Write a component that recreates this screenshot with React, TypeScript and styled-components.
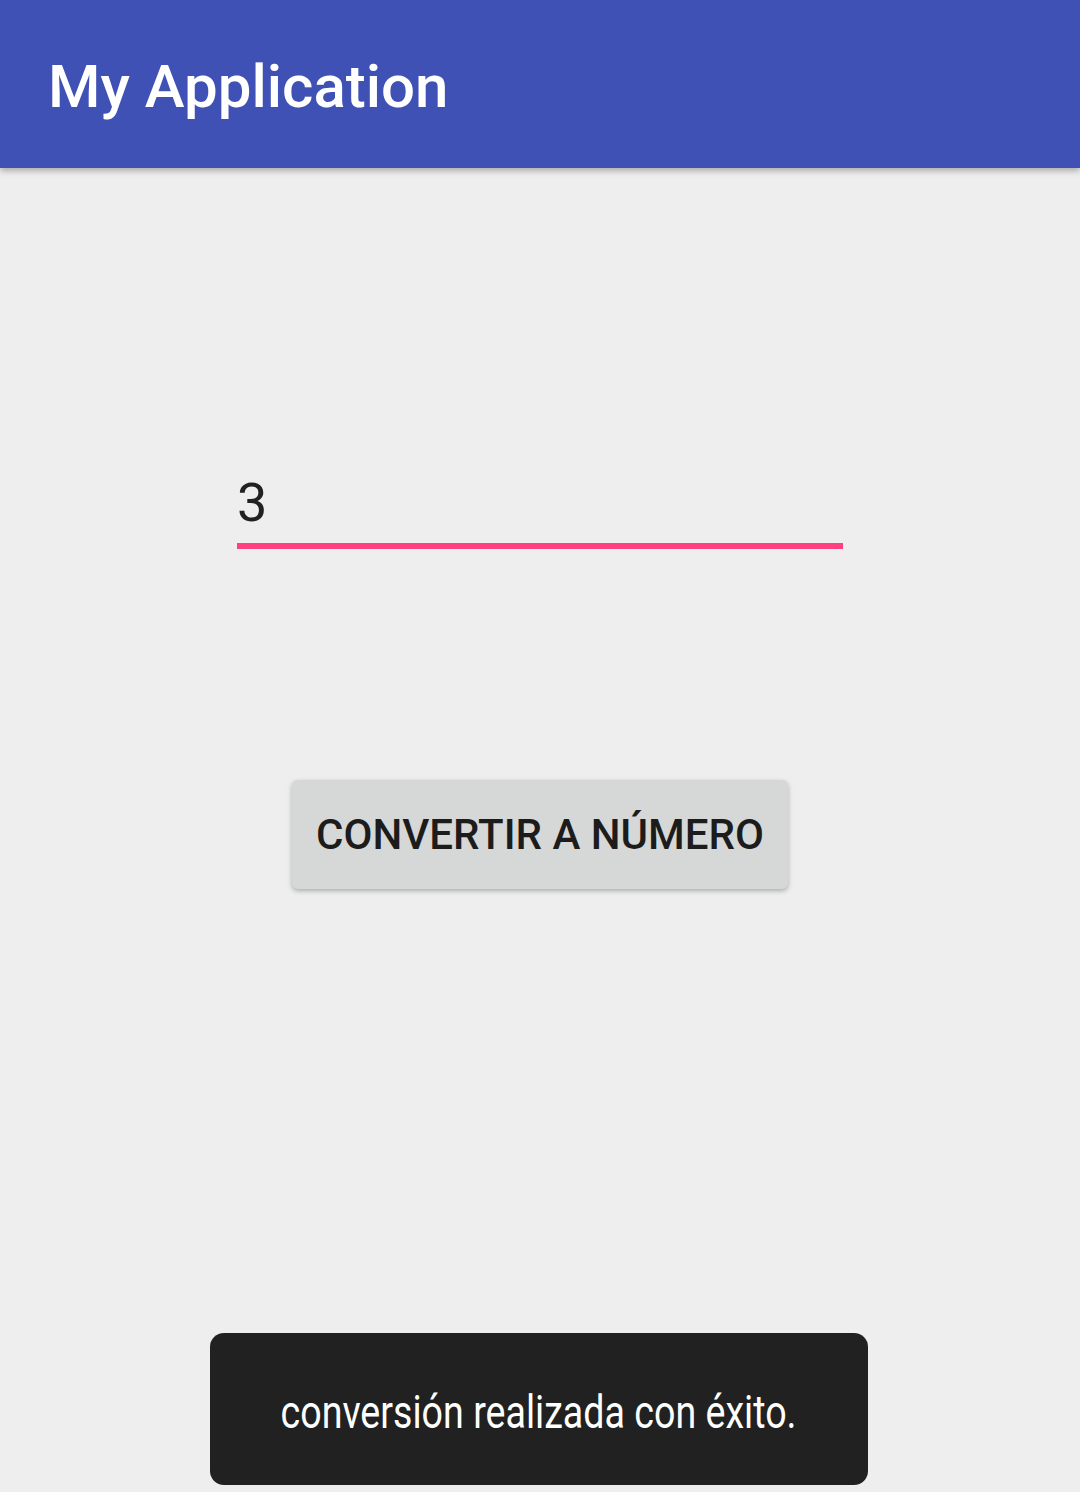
import styled, { createGlobalStyle } from "styled-components"

const GlobalStyle = createGlobalStyle`
  html, body {
    margin: 0;
    padding: 0;
    background: #eeeeee;
    font-family: Roboto, "Noto Sans", sans-serif;
  }
`

const Screen = styled.div`
  position: relative;
  width: 1080px;
  height: 1492px;
  background: #eeeeee;
  overflow: hidden;
  display: flex;
  flex-direction: column;
`

const AppBar = styled.header`
  height: 168px;
  background: #3f51b5;
  box-shadow: 0 3px 6px rgba(0, 0, 0, 0.28);
  display: flex;
  align-items: center;
  padding-left: 48px;
  position: relative;
  z-index: 1;
`

const Title = styled.h1`
  margin: 0;
  color: #ffffff;
  font-family: Roboto, sans-serif;
  font-weight: 500;
  font-size: 60px;
  letter-spacing: 0;
  padding-top: 4px;
`

const Content = styled.main`
  display: flex;
  flex-direction: column;
  align-items: center;
  padding-top: 303px;
`

const Field = styled.div`
  width: 606px;
  border-bottom: 6px solid #ff4081;
  padding-bottom: 8px;
`

const FieldValue = styled.span`
  display: block;
  font-family: Roboto, sans-serif;
  font-size: 54px;
  line-height: 64px;
  color: #212121;
`

const Button = styled.button`
  margin-top: 231px;
  width: 496px;
  height: 109px;
  border: none;
  border-radius: 6px;
  background: #d6d7d7;
  box-shadow: 0 2px 5px rgba(0, 0, 0, 0.28);
  font-family: Roboto, sans-serif;
  font-weight: 500;
  font-size: 42px;
  color: #1c1c1c;
  text-transform: uppercase;
  padding: 0;
`

const Toast = styled.div`
  position: absolute;
  left: 210px;
  bottom: 7px;
  width: 658px;
  height: 152px;
  border-radius: 14px;
  background: #212121;
  display: flex;
  align-items: center;
  justify-content: center;
`

const ToastText = styled.span`
  display: inline-block;
  color: #ffffff;
  font-family: Roboto, sans-serif;
  font-size: 47px;
  transform: scaleX(0.8);
  white-space: nowrap;
  padding-top: 4px;
`

export default function App() {
    return (
        <>
            <GlobalStyle />
            <Screen>
                <AppBar>
                    <Title>My Application</Title>
                </AppBar>

                <Content>
                    <Field>
                        <FieldValue>3</FieldValue>
                    </Field>

                    <Button>Convertir a número</Button>
                </Content>

                <Toast>
                    <ToastText>conversión realizada con éxito.</ToastText>
                </Toast>
            </Screen>
        </>
    )
}
